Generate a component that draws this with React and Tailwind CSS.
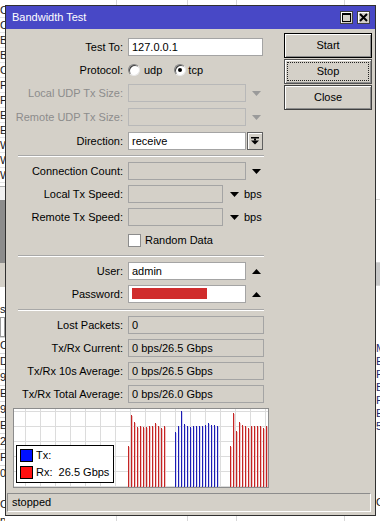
import React from 'react';

const FONT = "font-['Liberation_Sans',Arial,sans-serif]";

// bar tops in graph coordinates (graph inner is 254x78)
const redA = [37, 6, 13, 18, 17, 18, 18, 17, 17, 14, 17, 19, 17];
const blueB = [23, 17, 2, 15, 17, 18, 17, 17, 17, 17, 16, 14, 16, 16, 17];
const redC = [37, 4, 22, 13, 16, 17, 19, 17, 17, 17, 17, 19, 17];

const leftTop = ['C', 'C', 'B', 'B', 'C', 'P', 'P', 'E', 'E', 'W', 'W', 'W'];
const leftBottom = ['C', 'D', '9', 'E', '9', 'E', '2', 'F', '0'];

function Arrow({ up, color = '#000' }) {
  return (
    <svg width="9" height="5" viewBox="0 0 9 5">
      <path d={up ? 'M0 5L4.5 0L9 5Z' : 'M0 0L9 0L4.5 5Z'} fill={color} />
    </svg>
  );
}

function Row({ label, disabled, className = '', children }) {
  return (
    <div className={`flex h-[18px] items-center ${className}`}>
      <div className={`w-[122px] shrink-0 pr-[5px] text-right ${disabled ? 'text-[#8c8c8c]' : 'text-black'}`}>
        {label}
      </div>
      {children}
    </div>
  );
}

function Field({ className = '', white, children }) {
  return (
    <div
      className={`h-[18px] shrink-0 border border-[#a4a4a4] px-[3px] leading-[16px] ${white ? 'bg-white' : 'bg-[#d4d0c8]'} ${className}`}
    >
      {children}
    </div>
  );
}

function ArrowSlot({ up, color }) {
  return (
    <div className="flex w-[18px] justify-center pl-[2px]">
      <Arrow up={up} color={color} />
    </div>
  );
}

function Sep({ className = '' }) {
  return <div className={`ml-[12px] w-[246px] border-t border-b border-t-[#a8a8a8] border-b-white ${className}`} />;
}

function Bars({ xs, tops, stroke, halo }) {
  return tops.map((t, i) => (
    <g key={i}>
      <rect x={xs + i * 3 + 1} y={t + 1} width="1" height={77 - t} fill={halo} />
      <rect x={xs + i * 3} y={t} width="1" height={78 - t} fill={stroke} />
    </g>
  ));
}

function Graph() {
  const vlines = [];
  for (let x = 11; x < 254; x += 15) vlines.push(x);
  const hlines = [2, 17, 32, 47, 62, 77];
  return (
    <div className="relative ml-[7px] mt-[5px] h-[80px] w-[256px] border border-[#8c8c8c] bg-white">
      <svg width="254" height="78" viewBox="0 0 254 78" className="block">
        {vlines.map((x) => (
          <rect key={'v' + x} x={x} y="0" width="1" height="78" fill="#dcdcdc" />
        ))}
        {hlines.map((y) => (
          <rect key={'h' + y} x="0" y={y} width="254" height="1" fill="#dcdcdc" />
        ))}
        <Bars xs={114} tops={redA} stroke="#c42424" halo="#f2c4c4" />
        <Bars xs={161} tops={blueB} stroke="#1c1cb4" halo="#d4d4f2" />
        <Bars xs={216} tops={redC} stroke="#c42424" halo="#f2c4c4" />
      </svg>
      <div className="absolute left-[2px] top-[36px] flex h-[38px] w-[98px] flex-col gap-[4px] border border-black bg-white pl-[3px] pt-[3px]">
        <div className="flex h-[13px] items-center gap-[3px]">
          <div className="h-[13px] w-[13px] border border-black bg-[#0010ff]" />
          <span>Tx:</span>
        </div>
        <div className="flex h-[13px] items-center gap-[3px]">
          <div className="h-[13px] w-[13px] border border-black bg-[#ff1010]" />
          <span>Rx:&nbsp;&nbsp;26.5 Gbps</span>
        </div>
      </div>
    </div>
  );
}

function Button({ children, variant }) {
  const border =
    variant === 'default' ? 'border-black' : variant === 'focus' ? 'border-[#505050]' : 'border-[#404040]';
  return (
    <div
      className={`flex h-[25px] w-[88px] items-center justify-center border ${border} bg-[#d4d0c8] shadow-[inset_1px_1px_#ffffff,inset_-1px_-1px_#8c8c8c]`}
    >
      {variant === 'focus' ? (
        <div className="flex h-[19px] w-[82px] items-center justify-center border border-dotted border-[#222]">
          {children}
        </div>
      ) : (
        children
      )}
    </div>
  );
}

function TitleButton({ children }) {
  return (
    <div className="flex h-[13px] w-[13px] items-center justify-center border border-[#404040] bg-[#d4d0c8] shadow-[inset_1px_1px_#ffffff]">
      {children}
    </div>
  );
}

function Radio({ checked }) {
  return (
    <div className="flex h-[12px] w-[12px] items-center justify-center rounded-full border border-t-[#808080] border-l-[#808080] border-b-[#e8e8e8] border-r-[#e8e8e8] bg-white shadow-[inset_1px_1px_#404040]">
      {checked && <div className="h-[4px] w-[4px] rounded-full bg-black" />}
    </div>
  );
}

function Dialog() {
  return (
    <div className="absolute left-[5px] top-[5px] flex h-[511px] w-[371px] flex-col border border-[#303030] bg-[#d4d0c8] text-[11px] text-black">
      <div className="flex h-[23px] shrink-0 items-center justify-between bg-[#4848c6] pl-[6px] pr-[5px] text-white">
        <span className="text-[11px]">Bandwidth Test</span>
        <div className="flex gap-[4px]">
          <TitleButton>
            <div className="h-[9px] w-[9px] border border-t-2 border-black" />
          </TitleButton>
          <TitleButton>
            <svg width="9" height="9" viewBox="0 0 9 9">
              <path d="M1 1L8 8M8 1L1 8" stroke="#000" strokeWidth="2" />
            </svg>
          </TitleButton>
        </div>
      </div>

      <div className="flex">
        <div className="flex w-[278px] shrink-0 flex-col pt-[9px]">
          <Row label="Test To:">
            <Field white className="w-[135px]">127.0.0.1</Field>
          </Row>
          <Row label="Protocol:" className="mt-[5px]">
            <div className="flex items-center">
              <Radio />
              <span className="ml-[4px]">udp</span>
              <div className="ml-[12px]">
                <Radio checked />
              </div>
              <span className="ml-[2px]">tcp</span>
            </div>
          </Row>
          <Row label="Local UDP Tx Size:" disabled className="mt-[5px]">
            <Field className="w-[118px] border-[#b8b8b8]" />
            <ArrowSlot color="#9a9a9a" />
          </Row>
          <Row label="Remote UDP Tx Size:" disabled className="mt-[6px]">
            <Field className="w-[118px] border-[#b8b8b8]" />
            <ArrowSlot color="#9a9a9a" />
          </Row>
          <Row label="Direction:" className="mt-[6px]">
            <Field white className="w-[118px]">receive</Field>
            <div className="ml-[1px] flex h-[18px] w-[16px] items-center justify-center border border-[#606060] bg-[#d4d0c8] shadow-[inset_1px_1px_#ffffff]">
              <svg width="8" height="8" viewBox="0 0 8 8">
                <rect x="0" y="0" width="8" height="1.5" fill="#000" />
                <rect x="3" y="1.5" width="2" height="2" fill="#000" />
                <path d="M0 3.5L8 3.5L4 7.5Z" fill="#000" />
              </svg>
            </div>
          </Row>
          <Sep className="mt-[5px]" />
          <Row label="Connection Count:" className="mt-[5px]">
            <Field className="w-[118px]" />
            <ArrowSlot />
          </Row>
          <Row label="Local Tx Speed:" className="mt-[5px]">
            <Field className="w-[95px]" />
            <div className="ml-[7px] flex items-center">
              <Arrow />
            </div>
            <span className="ml-[5px]">bps</span>
          </Row>
          <Row label="Remote Tx Speed:" className="mt-[5px]">
            <Field className="w-[95px]" />
            <div className="ml-[7px] flex items-center">
              <Arrow />
            </div>
            <span className="ml-[5px]">bps</span>
          </Row>
          <Row label="" className="mt-[5px]">
            <div className="h-[13px] w-[13px] border border-[#8c8c8c] bg-white" />
            <span className="ml-[4px]">Random Data</span>
          </Row>
          <Sep className="mt-[6px]" />
          <Row label="User:" className="mt-[5px]">
            <Field white className="w-[118px]">admin</Field>
            <ArrowSlot up />
          </Row>
          <Row label="Password:" className="mt-[5px]">
            <Field white className="w-[118px] px-0 pt-[2px]">
              <div className="h-[11px] w-[75px] bg-[#d02c2c]" />
            </Field>
            <ArrowSlot up />
          </Row>
          <Sep className="mt-[6px]" />
          <Row label="Lost Packets:" className="mt-[5px]">
            <Field className="w-[136px] border-[#909090]">0</Field>
          </Row>
          <Row label="Tx/Rx Current:" className="mt-[5px]">
            <Field className="w-[136px] border-[#909090]">0 bps/26.5 Gbps</Field>
          </Row>
          <Row label="Tx/Rx 10s Average:" className="mt-[5px]">
            <Field className="w-[136px] border-[#909090]">0 bps/26.5 Gbps</Field>
          </Row>
          <Row label="Tx/Rx Total Average:" className="mt-[5px]">
            <Field className="w-[136px] border-[#909090]">0 bps/26.0 Gbps</Field>
          </Row>
          <Graph />
        </div>

        <div className="flex flex-col gap-[1px] pt-[4px]">
          <Button variant="default">Start</Button>
          <Button variant="focus">Stop</Button>
          <Button>Close</Button>
        </div>
      </div>

      <div className="ml-[1px] mt-[5px] flex h-[19px] w-[364px] items-center border border-t-[#8c8c8c] border-l-[#8c8c8c] border-b-white border-r-white pl-[4px]">
        stopped
      </div>
    </div>
  );
}

export default function App() {
  return (
    <div className={`relative h-[521px] w-[380px] overflow-hidden bg-white text-[11px] text-[#1a1a1a] ${FONT}`}>
      <div className="flex h-full">
        <div className="flex w-[5px] shrink-0 flex-col overflow-hidden leading-[15px]">
          <div className="h-[3px] shrink-0" />
          {leftTop.map((c, i) => (
            <div key={i} className="h-[15px] shrink-0 border-b border-[#e4e4e4]">
              {c}
            </div>
          ))}
          <div className="h-[4px] shrink-0 border-b border-[#b0b0b0]" />
          <div className="h-[13px] shrink-0 bg-[#f0f0f0]" />
          <div className="h-[63px] shrink-0 bg-[#8c8c8c]" />
          <div className="h-[24px] shrink-0 bg-[#d4d0c8]" />
          <div className="flex h-[30px] shrink-0 items-end">s</div>
          <div className="h-[20px] shrink-0 border border-[#9a9a9a] bg-white" />
          {leftBottom.map((c, i) => (
            <div key={i} className="h-[16px] shrink-0 border-t border-[#d8d8d8] leading-[15px]">
              {c}
            </div>
          ))}
          <div className="h-[16px] shrink-0" />
          <div className="h-[16px] shrink-0">C</div>
          <div className="h-[16px] shrink-0">pa</div>
        </div>

        <div className="flex flex-1">
          <div className="w-[112px] border-r border-[#d8d8d8]" />
          <div className="w-[71px] border-r border-[#d8d8d8]" />
          <div className="w-[49px] border-r border-[#d8d8d8]" />
          <div className="w-[108px] border-r border-[#d8d8d8]" />
        </div>

        <div className="flex w-[4px] shrink-0 flex-col overflow-hidden leading-[15px]">
          <div className="h-[200px] shrink-0 border-b border-[#d8d8d8]" />
          <div className="h-[63px] shrink-0 border-b border-[#d8d8d8]" />
          <div className="h-[22px] shrink-0 bg-[#c8c8c8]" />
          <div className="h-[57px] shrink-0 border-t border-[#d8d8d8]" />
          {['M', 'E', 'F', 'B', 'F', 'E', '5'].map((c, i) => (
            <div key={i} className="h-[13px] shrink-0 leading-[13px] text-[#1a2a6a]">
              {c}
            </div>
          ))}
          <div className="h-[62px] shrink-0" />
          <div className="h-[16px] shrink-0">C</div>
        </div>
      </div>

      <Dialog />
    </div>
  );
}
